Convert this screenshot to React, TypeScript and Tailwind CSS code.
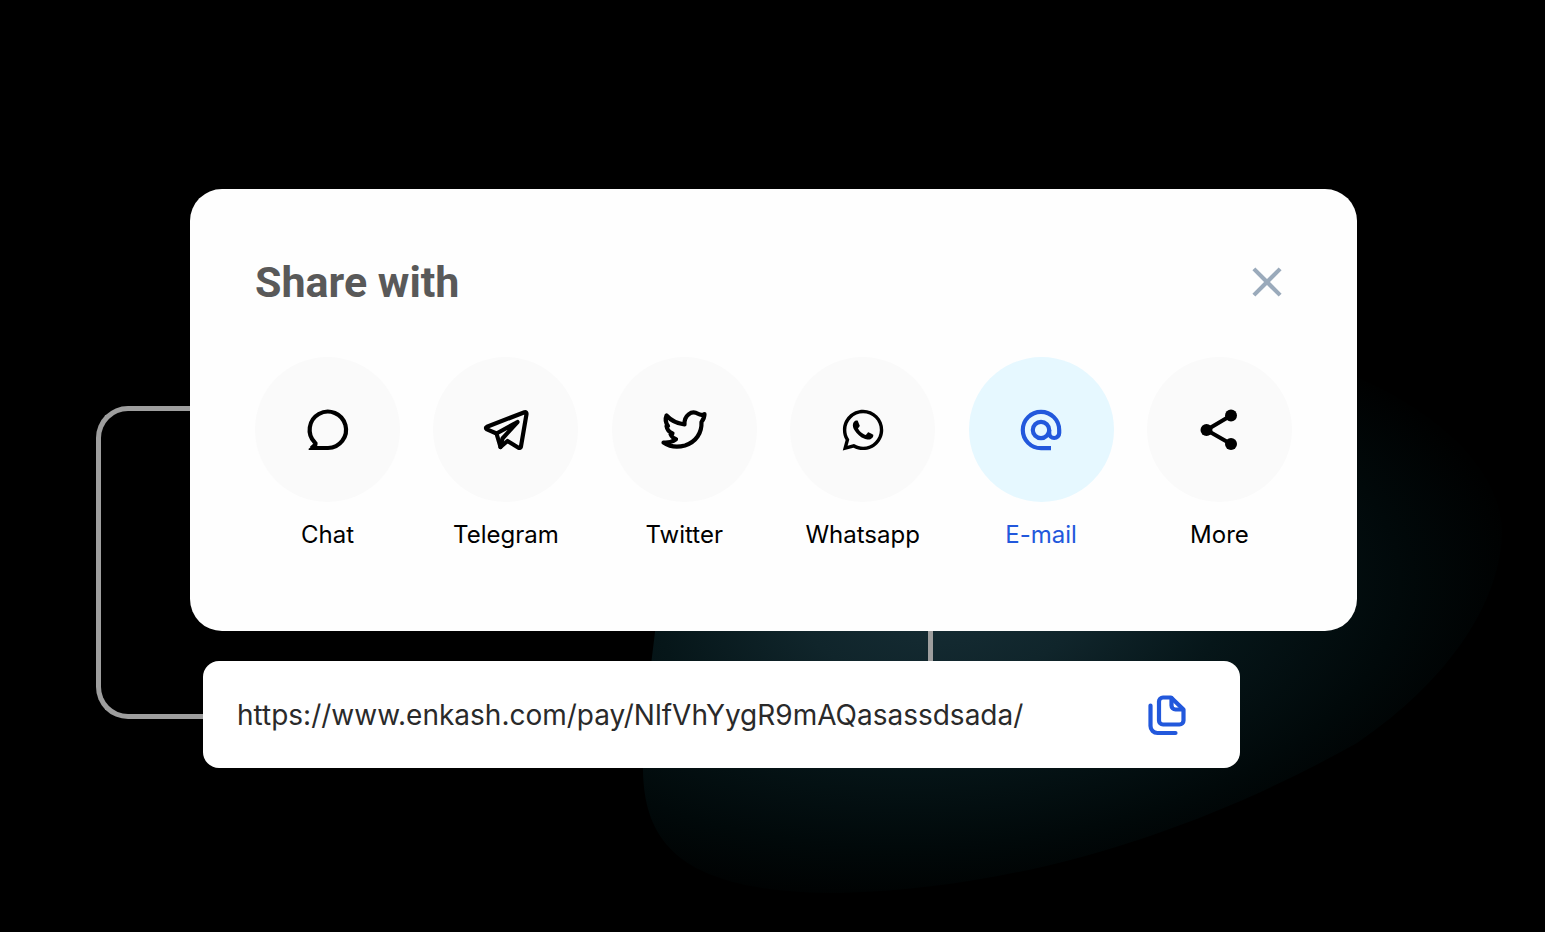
import type { ReactNode } from "react";
import { clsx } from "clsx";
import { LiaWhatsapp } from "react-icons/lia";
import { MdClose } from "react-icons/md";

type ShareTarget = {
  name: string;
  icon: ReactNode;
  active?: boolean;
};

const payLink = "https://www.enkash.com/pay/NlfVhYygR9mAQasassdsada/";

function LineIcon({ children }: { children: ReactNode }) {
  return (
    <svg
      viewBox="0 0 48 48"
      className="size-12"
      fill="none"
      stroke="currentColor"
      strokeWidth="4.2"
      strokeLinecap="round"
      strokeLinejoin="round"
      aria-hidden="true"
    >
      {children}
    </svg>
  );
}

function ChatIcon() {
  return (
    <svg viewBox="0 0 48 48" className="size-12" fill="none" stroke="currentColor" strokeWidth="4.2" aria-hidden="true">
      <path d="M24 42A18.2 18.2 0 1 0 10.8 36.5L12 38 7.5 42Z" strokeLinejoin="bevel" />
      <path d="M5 42.5 9.5 39V44H4.5Z" fill="currentColor" stroke="none" />
    </svg>
  );
}

function TelegramIcon() {
  return (
    <LineIcon>
      <path d="M42.5 6.2 5 20.8q-2.2 1.2 0 2.6L14.5 27.5 18.5 41 25.5 35 36.5 41.8q1.8.7 2.4-1L44.5 8.2q.2-2.4-2-2Z" />
      <path d="M14.5 27.5 35.5 16 20.5 32.5 18.5 41" />
    </LineIcon>
  );
}

function TwitterIcon() {
  return (
    <LineIcon>
      <path d="M44.5 8C42.5 9.2 40 9 38 7.8 31.5 4 24 9.5 24.5 18.5 17 17.5 11 14.5 6.5 9.5 5 13 5.5 16.5 8 20L6.5 20C7 23.5 9 26 12.5 27.5L10.5 28C11.5 30.5 13 32 16 33.2 12 36 7.5 37 3.5 36.5 10 41 18 41.5 25 39.5 36 36 42 27 41.5 16 43.5 13.5 44.5 11 44.5 8Z" />
    </LineIcon>
  );
}

function EmailIcon() {
  return (
    <svg viewBox="0 0 48 48" className="size-12" fill="none" stroke="currentColor" strokeWidth="4.2" aria-hidden="true">
      <circle cx="24" cy="24" r="8.2" />
      <path d="M34 42.2H24A18.2 18.2 0 1 1 42.2 24v3a5 5 0 0 1-10 0v-3" />
    </svg>
  );
}

function ShareIcon() {
  return (
    <svg viewBox="0 0 48 48" className="size-12" fill="currentColor" aria-hidden="true">
      <path d="M36 9.5 11.5 24 36 38" fill="none" stroke="currentColor" strokeWidth="4" />
      <circle cx="36" cy="9.5" r="6" />
      <circle cx="11.5" cy="24" r="6" />
      <circle cx="36" cy="38" r="6" />
    </svg>
  );
}

function CopyIcon() {
  return (
    <LineIcon>
      <path d="M27 6.5H19a4 4 0 0 0-4 4v19a4 4 0 0 0 4 4h16.5a4 4 0 0 0 4-4V18.5Z" />
      <path d="M27.5 7v7.5a4 4 0 0 0 4 4H38.5" />
      <path d="M6.5 14.5v20.500a7 7 0 0 0 7 7h18" />
    </LineIcon>
  );
}

const targets: ShareTarget[] = [
  { name: "Chat", icon: <ChatIcon /> },
  { name: "Telegram", icon: <TelegramIcon /> },
  { name: "Twitter", icon: <TwitterIcon /> },
  { name: "Whatsapp", icon: <LiaWhatsapp className="size-[54px]" /> },
  { name: "E-mail", icon: <EmailIcon />, active: true },
  { name: "More", icon: <ShareIcon /> },
];

function Glow() {
  return (
    <svg
      viewBox="0 0 1545 932"
      className="absolute inset-0 h-full w-full"
      preserveAspectRatio="none"
      aria-hidden="true"
    >
      <defs>
        <radialGradient id="glow" gradientUnits="userSpaceOnUse" cx="0" cy="0" r="1" gradientTransform="translate(945 605) rotate(-4) scale(570 300)">
          <stop offset="0" stopColor="#162d35" />
          <stop offset="0.25" stopColor="#10252b" />
          <stop offset="0.5" stopColor="#061619" />
          <stop offset="0.8" stopColor="#01090a" />
          <stop offset="1" stopColor="#000101" />
        </radialGradient>
      </defs>
      <path
        d="M700 440C660 560 656 620 655 632C648 690 643 730 643 770C644 850 690 893 840 893C1040 888 1220 820 1357 743C1450 680 1502 600 1502 530C1500 470 1440 410 1340 370C1100 300 760 300 700 440Z"
        fill="url(#glow)"
      />
    </svg>
  );
}

export default function App() {
  return (
    <main className="relative min-h-screen overflow-hidden bg-black px-6 pt-[189px] pb-24 lg:pr-[188px] lg:pl-[190px]">
      <Glow />

      <div className="relative">
        {/* bracket joining the card to the link bar */}
        <div className="absolute top-[217px] bottom-[49px] -left-[94px] w-32 rounded-l-[32px] border-[5px] border-r-0 border-[#9e9e9e]" />

        <section aria-labelledby="share-title" className="relative rounded-[32px] bg-[#fefefe] px-[65px] pt-[66px] pb-[79px]">
          <header className="flex items-center justify-between">
            <h1 id="share-title" className="font-['Roboto',sans-serif] text-[43px] leading-[54px] font-bold text-[#595959]">
              Share with
            </h1>
            <button type="button" aria-label="Close" className="cursor-pointer text-[#9aaabb]">
              <MdClose className="size-[50px]" />
            </button>
          </header>

          <ul className="mt-12 flex flex-wrap justify-between">
            {targets.map((t) => (
              <li key={t.name}>
                <button
                  type="button"
                  className={clsx(
                    "flex cursor-pointer flex-col items-center gap-4 font-['Inter',sans-serif] text-2xl leading-[34px]",
                    t.active ? "text-[#2258dc]" : "text-black"
                  )}
                >
                  <span
                    className={clsx(
                      "flex size-[145px] items-center justify-center rounded-full",
                      t.active ? "bg-[#e6f8ff]" : "bg-[#fafafa]"
                    )}
                  >
                    {t.icon}
                  </span>
                  {t.name}
                </button>
              </li>
            ))}
          </ul>
        </section>

        <div className="ml-[738px] h-[30px] w-[5px] bg-[#9e9e9e]" />

        <div className="relative mr-[117px] ml-[13px] flex h-[107px] items-center rounded-2xl bg-white pr-[48px] pl-[34px]">
          <input
            type="text"
            readOnly
            aria-label="Payment link"
            value={payLink}
            className="min-w-0 flex-1 bg-transparent font-['Inter',sans-serif] text-[28px] leading-9 text-[#2a2a2a] outline-none"
          />
          <button type="button" aria-label="Copy link" className="cursor-pointer text-[#2258dc]">
            <CopyIcon />
          </button>
        </div>
      </div>
    </main>
  );
}
